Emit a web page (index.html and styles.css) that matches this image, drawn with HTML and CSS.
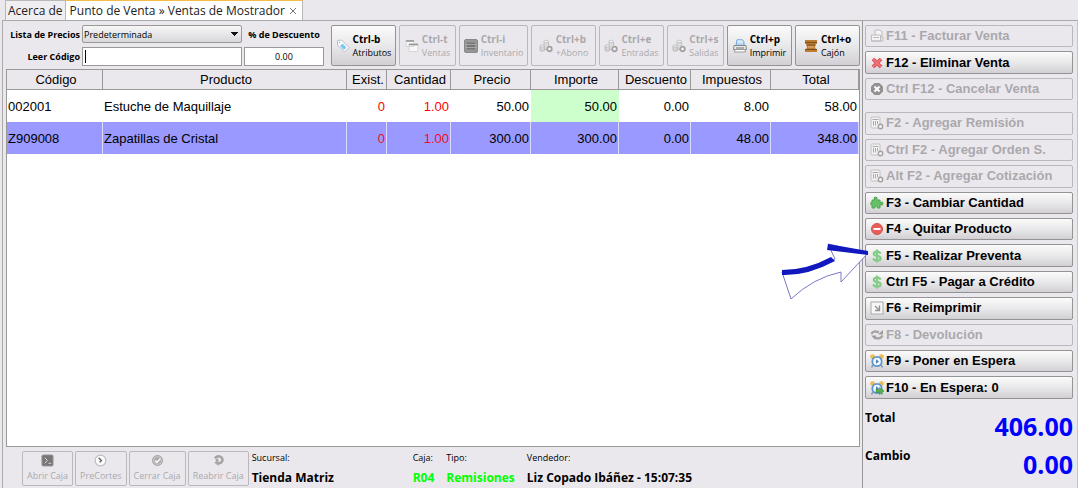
FILE: index.html
```html
<!DOCTYPE html>
<html lang="es">
<head>
<meta charset="utf-8">
<title>Punto de Venta</title>
<link rel="stylesheet" href="styles.css">
</head>
<body>
<svg class="defs" aria-hidden="true">
  <defs>
    <linearGradient id="steel" x1="0" y1="0" x2="0" y2="1"><stop offset="0" stop-color="#fff"/><stop offset="1" stop-color="#9ec4ea"/></linearGradient>
    <symbol id="db" viewBox="0 0 14 14">
      <path d="M5 2.500v8h4.500v-8z" fill="#dcdcdc" stroke="#c4c4c4"/><ellipse cx="7.200" cy="2.500" rx="2.300" ry="1.300" fill="#f2f2f2" stroke="#c4c4c4"/>
      <path d="M1 7v4.500q2 1.500 4.500 0V7z" fill="#d4d4d4" stroke="#bcbcbc"/><ellipse cx="3.200" cy="7" rx="2.200" ry="1.200" fill="#eee" stroke="#c4c4c4"/>
      <circle cx="10.500" cy="10" r="2.300" fill="#f0f0f0" stroke="#a0a0a0" stroke-width="1.700"/>
    </symbol>
    <symbol id="doc" viewBox="0 0 14 14">
      <rect x="1" y="1" width="9" height="11" rx="1" fill="#f2f2f2" stroke="#c0c0c0"/><path d="M2.500 3.500h6M3.500 5v4.500M5.500 5v4.500M7.500 5v3" stroke="#aaa"/>
      <circle cx="10.500" cy="10.500" r="2.200" fill="#f4f4f4" stroke="#a2a2a2" stroke-width="1.400"/>
    </symbol>
    <symbol id="dollar" viewBox="0 0 14 14">
      <path d="M10.600 4.600Q9.800 2.600 7 2.600 3.800 2.600 3.800 4.700 3.800 6.500 7 6.900q3.600.5 3.600 2.500 0 2.200-3.600 2.200-3 0-3.800-2.200M7 .5v13" fill="none" stroke="#82cc88" stroke-width="2.200"/>
    </symbol>
    <symbol id="clock" viewBox="0 0 14 14">
      <circle cx="2.600" cy="2.600" r="2.400" fill="#eeb951"/><circle cx="11.400" cy="2.600" r="2.400" fill="#eeb951"/><path d="M3 11l-1.500 2.500M11 11l1.500 2.500" stroke="#8b9bb0" stroke-width="1.500"/>
      <circle cx="7" cy="7.500" r="4.700" fill="#f5faff" stroke="#5b96cf" stroke-width="1.800"/><path d="M6 5.300L9 7.500 6 9.700z" fill="#5080b0"/>
    </symbol>
  </defs>
</svg>
<div class="app">
  <nav class="tabs">
    <a class="tab" href="#acerca">Acerca de</a>
    <a class="tab active" href="#ventas">Punto de Venta » Ventas de Mostrador <svg class="close" viewBox="0 0 8 8"><path d="M1 1l6 6M7 1L1 7" stroke="#777" fill="none"/></svg></a>
  </nav>
  <div class="panel">
    <main class="main">
      <header class="top">
        <form class="filters">
          <label for="lista">Lista de Precios</label>
          <select id="lista"><option>Predeterminada</option></select>
          <label class="center" for="desc">% de Descuento</label>
          <label for="codigo">Leer Código</label>
          <input id="codigo" class="code" type="text">
          <input id="desc" class="center" type="text" value="0.00">
        </form>
        <div class="tools">
          <button class="tool" type="button"><svg viewBox="0 0 14 14"><path d="M1.500 1.500l4-.5L13 8.500 8.500 13 1.500 6z" fill="#fff" stroke="#b8bec6"/><path d="M6.500 4.500L10.500 8.500 8 11 4 7z" fill="#7cc7f3"/><circle cx="3.500" cy="3.300" r=".9" fill="#bbb"/></svg><span><b>Ctrl-b</b>Atributos</span></button>
          <button class="tool narrow" type="button" disabled><svg viewBox="0 0 14 14"><path d="M1 1.500h8v6H1zM4 5h9v7.500H4z" fill="#f7f7f7" stroke="#d5d5d5"/><path d="M1 2h8M4 5.500h9" stroke="#929292" stroke-width="1.600"/></svg><span><b>Ctrl-t</b>Ventas</span></button>
          <button class="tool wide" type="button" disabled><svg viewBox="0 0 14 14"><rect x=".5" y=".5" width="13" height="13" rx="1.500" fill="#979797" stroke="#888"/><path d="M3 3.500h8v7H3z" fill="#777"/><path d="M1 5.500h12M1 8.500h12" stroke="#a7a7a7"/></svg><span><b>Ctrl-i</b>Inventario</span></button>
          <button class="tool" type="button" disabled><svg><use href="#db"/></svg><span><b>Ctrl+b</b>+Abono</span></button>
          <button class="tool" type="button" disabled><svg><use href="#db"/></svg><span><b>Ctrl+e</b>Entradas</span></button>
          <button class="tool narrow" type="button" disabled><svg><use href="#db"/></svg><span><b>Ctrl+s</b>Salidas</span></button>
          <button class="tool" type="button"><svg viewBox="0 0 14 14"><path d="M3 6.500L4 .8h5.500L11 3v3.500z" fill="url(#steel)" stroke="#6aa5df"/><path d="M1 6.500h12l.5 4H.5z" fill="#e5e5e5" stroke="#888"/><path d="M2 10.500h10l.5 2.500h-11z" fill="#fff" stroke="#999"/><path d="M3 9h8" stroke="#777"/></svg><span><b>Ctrl+p</b>Imprimir</span></button>
          <button class="tool" type="button"><svg viewBox="0 0 14 14"><path d="M1 1h12v3.500l-1.500 1L11 9l2 1.500V13H1v-2.500L3 9l-.5-3.500L1 4.500z" fill="#bc7d32"/><path d="M1 3.500h12M2.500 6h9M1 10.500h12" stroke="#7c4e1d"/><path d="M4 8h6" stroke="#e0a560" stroke-width="1.500"/></svg><span><b>Ctrl+o</b>Cajón</span></button>
        </div>
      </header>
      <div class="grid">
        <table>
          <colgroup><col class="w96"><col><col class="w40"><col class="w64"><col class="w80"><col class="w88"><col class="w72"><col class="w80"><col class="w88"></colgroup>
          <thead><tr><th>Código</th><th>Producto</th><th>Exist.</th><th>Cantidad</th><th>Precio</th><th>Importe</th><th>Descuento</th><th>Impuestos</th><th>Total</th></tr></thead>
          <tbody>
            <tr><td>002001</td><td>Estuche de Maquillaje</td><td class="red">0</td><td class="red">1.00</td><td>50.00</td><td class="green">50.00</td><td>0.00</td><td>8.00</td><td>58.00</td></tr>
            <tr class="selected"><td>Z909008</td><td>Zapatillas de Cristal</td><td class="red">0</td><td class="red">1.00</td><td>300.00</td><td>300.00</td><td>0.00</td><td>48.00</td><td>348.00</td></tr>
          </tbody>
        </table>
      </div>
      <footer class="status">
        <div class="cash">
          <button type="button" disabled><svg viewBox="0 0 14 14"><rect x="1" y="1" width="12" height="12" rx="1.500" fill="#777" stroke="#999"/><path d="M4 4l3 3-3 3M8 10h3" stroke="#ddd" fill="none"/></svg>Abrir Caja</button>
          <button type="button" disabled><svg viewBox="0 0 14 14"><circle cx="7" cy="7" r="5.800" fill="#fafafa" stroke="#bbb" stroke-width="1.200"/><path d="M5 4l3 3-2 2" stroke="#666" stroke-width="1.500" fill="none"/></svg>PreCortes</button>
          <button type="button" disabled><svg viewBox="0 0 14 14"><circle cx="7" cy="7" r="5.500" fill="#ababab" stroke="#a6a6a6"/><circle cx="7" cy="7" r="4.300" fill="none" stroke="#ccc"/><path d="M4.500 7l2 2 3.500-4" stroke="#fff" stroke-width="1.500" fill="none"/></svg>Cerrar Caja</button>
          <button type="button" disabled><svg viewBox="0 0 14 14"><path d="M3 4.500Q7 .5 10.500 4q2.500 4-2.500 6H6" stroke="#a2a2a2" stroke-width="2.600" fill="none"/><path d="M7 6v7L2.500 9.500zM4 5h3v3H4z" fill="#aaa"/></svg>Reabrir Caja</button>
        </div>
        <dl class="info">
          <div class="branch"><dt>Sucursal:</dt><dd>Tienda Matriz</dd></div>
          <div><dt>Caja:</dt><dd class="lime">R04</dd></div>
          <div><dt>Tipo:</dt><dd class="lime">Remisiones</dd></div>
          <div><dt>Vendedor:</dt><dd>Liz Copado Ibáñez - 15:07:35</dd></div>
        </dl>
      </footer>
    </main>
    <aside class="side">
      <div class="actions">
        <button type="button" disabled><svg viewBox="0 0 14 14"><path d="M5 6V1h5l2 2v5M1.500 6h9v6h-9z" fill="#f3f3f3" stroke="#bdbdbd"/><path d="M3 8.500h6M1 12h12V8h-2" stroke="#bbb" fill="none"/></svg>F11 - Facturar Venta</button>
        <button type="button"><svg viewBox="0 0 14 14"><path d="M3 3l8 8M11 3l-8 8" stroke="#d94b50" stroke-width="3.800"/><path d="M3 3l8 8M11 3l-8 8" stroke="#ef7376" stroke-width="1.800"/></svg>F12 - Eliminar Venta</button>
        <button class="last" type="button" disabled><svg viewBox="0 0 14 14"><path d="M4.500 1h5L13 4.500v5L9.500 13h-5L1 9.500v-5z" fill="#929292"/><path d="M4.500 4.500l5 5M9.500 4.500l-5 5" stroke="#fff" stroke-width="2"/></svg>Ctrl F12 - Cancelar Venta</button>
        <button type="button" disabled><svg><use href="#doc"/></svg>F2 - Agregar Remisión</button>
        <button type="button" disabled><svg><use href="#doc"/></svg>Ctrl F2 - Agregar Orden S.</button>
        <button type="button" disabled><svg><use href="#doc"/></svg>Alt F2 - Agregar Cotización</button>
        <button type="button"><svg viewBox="0 0 14 14"><path d="M2 4h2.500Q3 1 5.500 1T6.800 4H10v2.500q3-1.500 3 1t-3 1.200V12H7.500q.3-2-1.300-2T5 12H2V9Q.5 9 .5 7.500T2 6.500z" fill="#66c067" stroke="#50a853"/></svg>F3 - Cambiar Cantidad</button>
        <button type="button"><svg viewBox="0 0 14 14"><circle cx="7" cy="7" r="5.500" fill="#e95d58" stroke="#cf5450"/><path d="M3.500 7h7" stroke="#fff" stroke-width="2"/></svg>F4 - Quitar Producto</button>
        <button type="button"><svg><use href="#dollar"/></svg>F5 - Realizar Preventa</button>
        <button type="button"><svg><use href="#dollar"/></svg>Ctrl F5 - Pagar a Crédito</button>
        <button type="button"><svg viewBox="0 0 14 14"><rect x="1" y="1" width="12" height="12" fill="#f7f7f7" stroke="#aaa"/><path d="M5 5l4 4M9.500 4.500v5H5" stroke="#929292" stroke-width="1.400" fill="none"/></svg>F6 - Reimprimir</button>
        <button type="button" disabled><svg viewBox="0 0 14 14"><path d="M1.500 6Q3 2 9 4.500M12.500 7.500Q10 12 5 9.500" stroke="#a5a5a5" stroke-width="2.400" fill="none"/><path d="M8 6.500h5V2zM6 7.500H1L5.500 12z" fill="#9d9d9d"/></svg>F8 - Devolución</button>
        <button type="button"><svg><use href="#clock"/></svg>F9 - Poner en Espera</button>
        <button type="button"><svg viewBox="0 0 14 14"><use href="#clock"/><path d="M6 8.500h3.500V6.500L14 10l-4.500 3.500v-2H6z" fill="#54b04e" stroke="#3d8e3b" stroke-width=".6"/></svg>F10 - En Espera: 0</button>
      </div>
      <dl class="totals">
        <div><dt>Total</dt><dd>406.00</dd></div>
        <div><dt>Cambio</dt><dd>0.00</dd></div>
      </dl>
    </aside>
  </div>
  <svg class="arrow" viewBox="0 0 90 60" aria-hidden="true">
    <path d="M2 32Q32 35 55 19L48 4 88 13 61 42V32Q33 38 11 59z" fill="#fff" stroke="#7878cc"/>
    <path d="M2 30Q27 30 51 17L55 21Q27 36 2 35zM48 4L88 11V15L47 10z" fill="#1118bd"/>
  </svg>
</div>
</body>
</html>
```
FILE: styles.css
```css
* { box-sizing: border-box; }
body { margin: 0; background: #ebe8ed; color: #000; font-family: "Open Sans", "Noto Sans", sans-serif; font-size: 9px; }
button, input, select { font-family: inherit; font-size: inherit; color: #000; }
dl, dd { margin: 0; }
.defs { position: absolute; width: 0; height: 0; }
.app { position: relative; min-height: 100vh; display: flex; flex-direction: column; }

.tabs { display: flex; height: 20px; padding-left: 5px; flex: none; }
.tab { display: flex; align-items: center; padding: 0 2px; color: #222; font-size: 12px; line-height: 18px; text-decoration: none; white-space: nowrap; background: #f0eef0; border: 1px solid #b8b8b8; border-bottom: 0; }
.tab.active { padding: 0 5px 0 4px; gap: 4px; background: #fff; border-left: 0; border-top: 1px solid #f4bd45; }
.close { width: 8px; height: 8px; }

.panel { display: flex; flex: 1; margin-left: 2px; border: 1px solid #aaa; border-right-color: #c4c4c4; border-bottom: 0; }
.main { flex: 1; min-width: 0; display: flex; flex-direction: column; padding: 4px 2px 2px 3px; }
.top { display: flex; justify-content: space-between; gap: 7px; height: 44px; }
.filters { display: grid; grid-template-columns: 74px 160px 80px; grid-template-rows: 18px 19px; column-gap: 2px; row-gap: 4px; align-items: center; }
.filters label { font-weight: bold; text-align: right; white-space: nowrap; }
.filters .center { text-align: center; }
.filters input { height: 19px; width: 100%; padding: 0 4px; border: 1px solid #999; background: #fff; }
.filters .code { background: linear-gradient(#000, #000) 2px 2px / 1px 13px no-repeat #fff; }
.filters select { height: 18px; width: 100%; padding: 0 1px; appearance: none; border: 1px solid #999; border-radius: 2px; background: linear-gradient(135deg, #111 50%, transparent 50%) right 2px center / 4px 4px no-repeat, linear-gradient(225deg, #111 50%, transparent 50%) right 6px center / 4px 4px no-repeat, linear-gradient(#f7f7f8, #d8d7da); }

button { border: 1px solid #949494; border-radius: 2px; background: linear-gradient(#fbfbfb, #e9e8ea 50%, #d2d0d4); }
button:disabled { border-color: #bab8bc; background: none; color: #aaa8ac; }
.tools { display: flex; gap: 3px; }
.tool { width: 65px; height: 41px; display: flex; align-items: center; justify-content: center; gap: 3px; padding: 0; text-align: left; line-height: 13px; white-space: nowrap; }
.tool.narrow { width: 57px; }
.tool.wide { width: 69px; }
.tool svg { width: 14px; height: 14px; flex: none; }
.tool b { display: block; font-size: 10px; }

.grid { flex: 1; background: #fff; border: 1px solid #999; }
table { width: 100%; table-layout: fixed; border-collapse: separate; border-spacing: 0; font-family: "Liberation Sans", Arial, sans-serif; font-size: 13px; }
th, td { padding: 0 1px; white-space: nowrap; border-right: 1px solid transparent; }
th { height: 20px; padding: 0 0 0 3px; font-weight: normal; line-height: 18px; background: #ebe8ed; border-right-color: #999; border-bottom: 1px solid #999; }
td { height: 32px; text-align: right; }
td:nth-child(-n+2) { text-align: left; }
.selected td { background: #9999ff; border-right-color: #dcdcff; }
td.red { color: #ff0000; }
.selected td.red { color: #f20d22; }
.green { background: #ccffcc; }
.w40 { width: 40px; } .w64 { width: 64px; } .w72 { width: 72px; } .w80 { width: 80px; } .w88 { width: 88px; } .w96 { width: 96px; }

.status { display: flex; gap: 3px; padding: 4px 0 0 16px; }
.cash { display: flex; gap: 2px; }
.cash button { height: 35px; padding: 0 4px; display: flex; flex-direction: column; align-items: center; justify-content: center; gap: 2px; line-height: 14px; white-space: nowrap; }
.cash svg { width: 13px; height: 13px; }
.info { display: flex; gap: 12px; white-space: nowrap; }
.branch { width: 149px; }
.info dt { line-height: 14px; }
.info dd { margin-top: 4px; font-size: 12px; line-height: 17px; font-weight: bold; }
.info .lime { color: #0f0; }

.side { width: 215px; display: flex; flex-direction: column; padding: 4px 4px 8px 2px; border-left: 1px solid #999; }
.actions { flex: 1; display: flex; flex-direction: column; gap: 4px; }
.actions button { flex: 1; min-height: 22px; display: flex; align-items: center; gap: 2px; padding: 0 4px; font: bold 13px/18px "Liberation Sans", Arial, sans-serif; text-align: left; white-space: nowrap; }
.actions .last { margin-bottom: 8px; }
.actions svg { width: 14px; height: 14px; flex: none; }
.totals { padding-top: 10px; }
.totals div { display: flex; justify-content: space-between; height: 33px; }
.totals div + div { margin-top: 5px; }
.totals dt { font-size: 12px; line-height: 18px; font-weight: bold; }
.totals dd { align-self: flex-end; font-size: 25px; line-height: 32px; font-weight: bold; color: #00f; }

.arrow { position: absolute; left: 780px; top: 240px; width: 90px; height: 60px; pointer-events: none; }
```
